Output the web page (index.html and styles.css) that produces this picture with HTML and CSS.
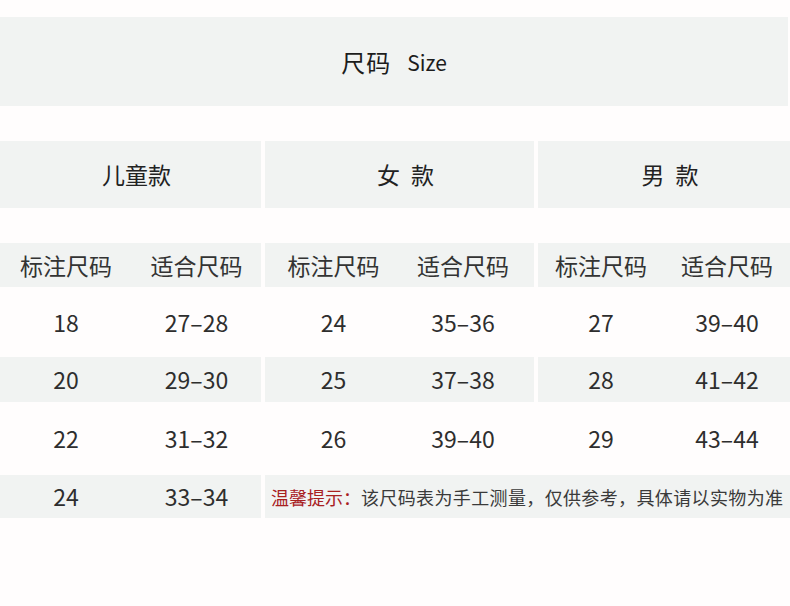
FILE: index.html
```html
<!DOCTYPE html>
<html lang="zh-CN">
<head>
<meta charset="utf-8">
<title>尺码 Size</title>
<link rel="stylesheet" href="styles.css">
</head>
<body>
<div class="title"><span class="title-cn">尺码</span><span class="title-en">Size</span></div>
<div class="table">
  <div class="cell head">儿童款</div>
  <div class="cell head gs">女 款</div>
  <div class="cell head gs">男 款</div>
  <div class="spacer"></div>

  <div class="cell sub band">标注尺码</div>
  <div class="cell sub band">适合尺码</div>
  <div class="cell sub band gs">标注尺码</div>
  <div class="cell sub band nr">适合尺码</div>
  <div class="cell sub band gs">标注尺码</div>
  <div class="cell sub band">适合尺码</div>

  <div class="cell num">18</div>
  <div class="cell num">27–28</div>
  <div class="cell num gs">24</div>
  <div class="cell num nr">35–36</div>
  <div class="cell num gs">27</div>
  <div class="cell num">39–40</div>

  <div class="cell num band">20</div>
  <div class="cell num band">29–30</div>
  <div class="cell num band gs">25</div>
  <div class="cell num band nr">37–38</div>
  <div class="cell num band gs">28</div>
  <div class="cell num band">41–42</div>

  <div class="cell num">22</div>
  <div class="cell num">31–32</div>
  <div class="cell num gs">26</div>
  <div class="cell num nr">39–40</div>
  <div class="cell num gs">29</div>
  <div class="cell num">43–44</div>

  <div class="cell num band">24</div>
  <div class="cell num band">33–34</div>
  <div class="cell tip band gs"><span class="tip-label">温馨提示：</span><span class="tip-text">该尺码表为手工测量，仅供参考，具体请以实物为准</span></div>
</div>
</body>
</html>
```

FILE: styles.css
```css
* { box-sizing: border-box; }

html, body {
  margin: 0;
  padding: 0;
  background: #fffdfd;
}

body {
  width: 790px;
  font-family: "Noto Sans CJK SC", "Noto Sans", sans-serif;
  color: #333;
}

.title {
  margin-top: 17px;
  width: 788px;
  height: 89px;
  background: #f1f3f2;
  display: flex;
  align-items: center;
  justify-content: center;
  color: #1c1c1c;
}

.title-cn {
  font-size: 24px;
  letter-spacing: 1px;
}

.title-en {
  font-size: 21px;
  margin-left: 16px;
}

.table {
  margin-top: 35px;
  display: grid;
  grid-template-columns: 132px 129px 141px 132px 130px 126px;
  grid-template-rows: 67px 35px 44px 70px 45px 73px 43px;
}

.cell {
  display: flex;
  align-items: center;
  justify-content: center;
  font-size: 22px;
  line-height: 1;
  white-space: nowrap;
}

.gs { margin-left: 4px; }
.nr { padding-right: 10px; }

.head {
  grid-column: span 2;
  background: #f1f3f2;
  color: #222;
  font-size: 23px;
  padding-left: 12px;
}

.head.gs { word-spacing: 6px; }

.spacer { grid-column: 1 / -1; }

.band { background: #f1f3f2; }

.sub { color: #333; font-size: 23px; }

.num { font-size: 23px; color: #2e2e2e; }

.tip {
  grid-column: span 4;
  justify-content: flex-start;
  padding-left: 6px;
  font-size: 18px;
  overflow: hidden;
}

.tip-label { color: #a8201f; }

.tip-text {
  display: inline-block;
  width: 422px;
  color: #3a3a3a;
  text-align: justify;
  text-align-last: justify;
}
```
